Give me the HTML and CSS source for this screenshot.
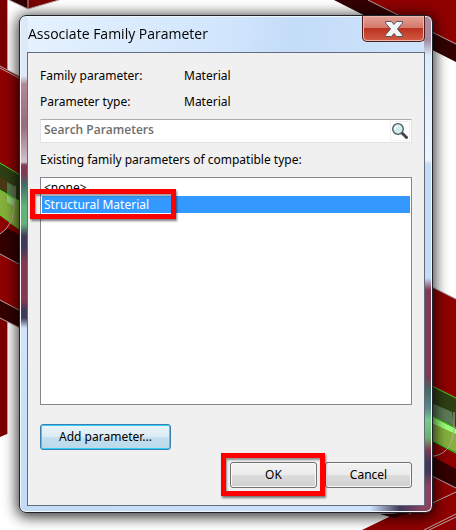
FILE: index.html
```html
<!DOCTYPE html>
<html lang="en">
<head>
  <meta charset="UTF-8" />
  <meta name="viewport" content="width=device-width, initial-scale=1.0" />
  <title>Associate Family Parameter</title>
  <link rel="stylesheet" href="styles.css">
</head>
<body>
  <svg class="scene" viewBox="0 0 456 530" preserveAspectRatio="none" aria-hidden="true">
    <!-- left beam -->
    <path fill="#7b0000" d="M0 0h7v434l-7 3z"/>
    <path fill="#330000" d="M9 0h19v9z"/>
    <path fill="#7b0000" d="M28 0h31L28 9z"/>
    <path fill="none" stroke="#b8a8a8" d="M9 0l19 9 31-9M28 0v9M7.500 0v72M7.500 322v112"/>
    <path fill="#900000" d="M0 66l32 17v250L0 318z"/>
    <path fill="#2f3f14" d="M0 163l32 19v28L0 190z"/>
    <path fill="#4a3a14" d="M0 177l12 7v12L0 189z"/>
    <path fill="#85b03c" d="M0 190l32 18v30L0 215z"/>
    <path fill="#557a48" d="M7 182l7 4v15l-7-4z"/>
    <path fill="#8fd07a" d="M7 195l7 4v7l-7-4z"/>
    <path fill="#330000" d="M7 228l25 14v30L0 254v-20z"/>
    <path fill="#330000" d="M0 300l32 17v17L0 318z"/>
    <path fill="none" stroke="#46e01c" d="M0 163l32 19M0 190l32 19M0 215l32 24"/>
    <path fill="none" stroke="#b8a8a8" d="M0 66l32 17M0 68l32 17M0 254l32 17M0 300l32 17M0 318l32 16M0 234l6-5 6-9 3-18v-16"/>

    <!-- right beam -->
    <path fill="#900000" d="M365 0h91v45z"/>
    <path fill="#330000" d="M334 0h34l88 44v18z"/>
    <path fill="#900000" d="M420 281l36 18v231h-94l58-28z"/>
    <path fill="#330000" d="M380 514l14 4 15-5z"/>
    <path fill="#2f3f14" d="M420 380l36 18v56l-36-18z"/>
    <path fill="#5d7a56" d="M420 398l32 14 2 14-34-16z"/>
    <path fill="#9cff7c" d="M420 410l36 19v6l-36-17z"/>
    <path fill="#85b03c" d="M420 418l36 16v18l-36-17z"/>
    <path fill="#330000" d="M420 450l36 19v19l-36-18z"/>
    <path fill="none" stroke="#46e01c" d="M420 380l36 18M420 410l36 18M420 434l36 19"/>
    <path fill="none" stroke="#b8a8a8" d="M368 0l88 44M420 281l36 18M420 470l36 18M454 412v16c-1 16-8 27-21 28M409 514l47-22M424 530l32-16M429 530l27-13"/>
  </svg>

  <main class="dialog">
    <header class="title-bar">
      <h1 class="title">Associate Family Parameter</h1>
      <button class="close" type="button" aria-label="Close">
        <svg width="18" height="16" viewBox="0 0 18 16">
          <path fill="#f4f4f4" stroke="#535666" stroke-linejoin="round" d="M.5.5h6L9 3.500 11.500.5h6v1.500L12.500 8l5 6v1.500h-6L9 12.500l-2.500 3h-6V14l5-6-5-6z"/>
        </svg>
      </button>
    </header>

    <form class="client">
      <dl class="info">
        <dt>Family parameter:</dt>
        <dd>Material</dd>
        <dt>Parameter type:</dt>
        <dd>Material</dd>
      </dl>

      <div class="search">
        <input class="search-input" type="text" placeholder="Search Parameters" aria-label="Search Parameters">
        <button class="search-button" type="button" aria-label="Search">
          <svg width="18" height="18" viewBox="0 0 18 18">
            <path stroke="#444" stroke-width="3" stroke-linecap="round" d="M10.500 10.500l5 5"/>
            <circle cx="7" cy="7" r="5.300" fill="#d3ecef" stroke="#46565a" stroke-width="1.300"/>
            <path fill="none" stroke="#fff" stroke-width="1.500" d="M4 7a3 3 0 0 1 3-3"/>
          </svg>
        </button>
      </div>

      <label class="list-label" for="parameters">Existing family parameters of compatible type:</label>
      <div class="list-wrap">
        <select class="list" id="parameters" size="10">
          <option>&lt;none&gt;</option>
          <option class="chosen" selected>Structural Material</option>
        </select>
        <span class="mark mark-option"></span>
      </div>

      <button class="btn btn-add" type="button">Add parameter...</button>

      <div class="actions">
        <div class="ok-wrap">
          <button class="btn" type="button">OK</button>
          <span class="mark mark-ok"></span>
        </div>
        <button class="btn" type="button">Cancel</button>
      </div>
    </form>
  </main>
</body>
</html>
```

FILE: styles.css
```css
* {
  box-sizing: border-box;
}
body {
  margin: 0;
  padding: 15px 23px 17px 19px;
  min-height: 100vh;
  display: flex;
  background: #fff;
  color: #000;
  font-family: "Noto Sans", Tahoma, sans-serif;
  font-size: 12px;
  line-height: 16px;
}
button, input, select {
  font: inherit;
  color: inherit;
}
.scene {
  position: fixed;
  inset: 0;
  width: 100%;
  height: 100%;
  z-index: -1;
}
.dialog {
  flex: 1;
  display: flex;
  flex-direction: column;
  padding: 0 7px 6px;
  border: 1px solid #20242c;
  border-radius: 7px;
  box-shadow: inset 0 0 0 1px #f1f6fb, 0 2px 14px 2px rgba(0, 0, 0, 0.8);
  background:
    linear-gradient(#dbe9f9 60px, #b58797 68px, #9a6a7e 110px, #d5c1cd 146px, #823953 149px, #823953 158px, #456963 168px, #62b27a 190px, #62b27a 208px, #40395a 220px, #40395a 232px, #823953 246px, #823953 285px, #40395a 294px, #40395a 302px, #cfe4fc 312px, #c3dbf5) left / 8px 100% no-repeat,
    linear-gradient(#b0899b 8px, #a08da3 24px, #dcecfd 40px, #edf5fe 144px, #c4dbf5 148px, #c4dbf5 262px, #823953 274px, #823953 360px, #456963 374px, #5b858a 392px, #78cb8a 404px, #6fae70 422px, #823953 434px, #40395a 446px, #40395a 456px, #8b4260 470px) right / 8px 100% no-repeat,
    linear-gradient(to right, #c3dbf5, #cfe4fc 350px, #40395a 380px, #8b4260 402px) bottom / 100% 8px no-repeat,
    linear-gradient(100deg, #e6f2fe, #cfe4fc 45%, #c3dcf8 55%, #d6e9fd);
}
.title-bar {
  display: flex;
  justify-content: space-between;
  align-items: flex-start;
  height: 36px;
}
.title {
  margin: 0;
  padding: 8px 1px;
  font: 14px/20px "Open Sans", "Segoe UI", sans-serif;
}
.close {
  width: 63px;
  height: 26px;
  display: flex;
  justify-content: center;
  align-items: center;
  padding: 0;
  border: 1px solid #4a1c1c;
  border-top: 0;
  border-radius: 0 0 5px 5px;
  background: linear-gradient(#e5a197, #d4776a 48%, #bd3220 50%, #d35c44);
  box-shadow: inset 0 0 0 1px #efb8ae;
}
.client {
  flex: 1;
  display: flex;
  flex-direction: column;
  padding: 15px 12px 17px;
  border: 1px solid #626c7c;
  background: #f0f0f0;
}
.info {
  display: grid;
  grid-template-columns: 144px 1fr;
  row-gap: 10px;
  margin: 0 0 9px;
}
.info dd {
  margin: 0;
}
.search {
  display: flex;
  height: 24px;
  margin-bottom: 9px;
  border: 1px solid #e2e3ea;
  border-top-color: #abadb3;
  background: #fff;
}
.search-input {
  flex: 1;
  min-width: 0;
  padding: 0 3px 3px;
  border: 0;
  background: none;
  outline: none;
}
.search-input::placeholder {
  color: #6d6d6d;
  font-family: "Open Sans", sans-serif;
  font-weight: 600;
  opacity: 1;
}
.search-button {
  width: 20px;
  display: flex;
  justify-content: center;
  align-items: center;
  padding: 0;
  margin: 1px;
  border: 1px solid #f0f0f0;
  background: #fff;
}
.list-label {
  margin-bottom: 9px;
}
.list-wrap {
  position: relative;
  flex: 1;
  display: flex;
}
.list {
  flex: 1;
  padding: 1px;
  border: 1px solid #828790;
  border-radius: 0;
  background: #fff;
  outline: none;
  overflow: hidden;
}
.list option {
  min-height: 16px;
  padding: 0 2px;
  line-height: 16px;
}
.list .chosen {
  background: #3399ff linear-gradient(#3399ff, #3399ff);
  color: #fff;
}
.mark {
  position: absolute;
  border: 5px solid #ff0000;
  box-shadow: 1px 2px 2px rgba(0, 0, 0, 0.5), inset 1px 2px 2px rgba(0, 0, 0, 0.4);
  pointer-events: none;
}
.mark-option {
  left: -10px;
  top: 12px;
  width: 146px;
  height: 30px;
}
.mark-ok {
  inset: -9px -8px -8px -9px;
}
.btn {
  width: 87px;
  height: 26px;
  padding: 0;
  border: 1px solid #707070;
  border-radius: 3px;
  background: linear-gradient(#f2f2f2, #ebebeb 50%, #dddddd 50%, #cfcfcf);
  box-shadow: inset 0 0 0 1px #fafafa;
}
.btn-add {
  width: 131px;
  margin: 19px 0 12px;
  border-color: #3c7fb1;
  background: linear-gradient(#eaf4fa, #dcecf4 50%, #c5e0ee 50%, #b9d9ea);
  box-shadow: inset 0 0 0 1px #35cdf9;
}
.actions {
  display: flex;
  justify-content: flex-end;
  gap: 8px;
}
.ok-wrap {
  position: relative;
  display: flex;
}
```
